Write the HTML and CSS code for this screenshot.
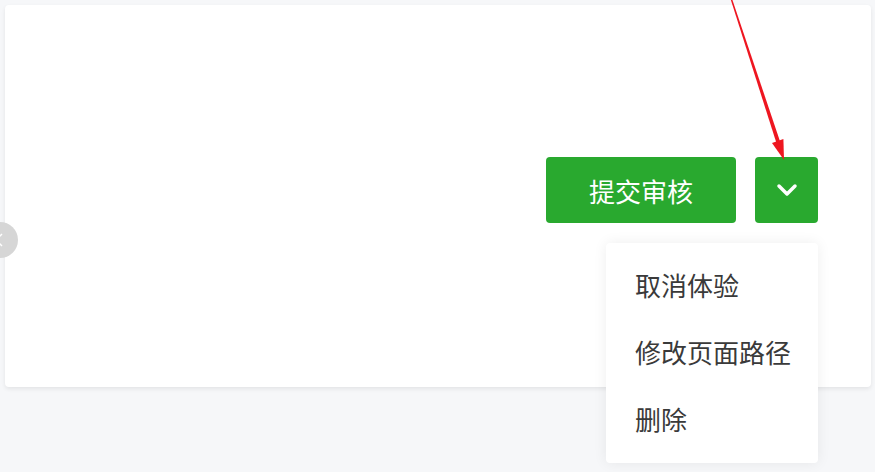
FILE: index.html
```html
<!DOCTYPE html>
<html lang="zh-CN">
<head>
  <meta charset="UTF-8" />
  <meta name="viewport" content="width=device-width, initial-scale=1.0" />
  <title>版本管理</title>
  <link rel="stylesheet" href="styles.css">
</head>
<body>
  <div class="side-toggle">
    <svg width="10" height="14" viewBox="0 0 10 14"><path d="M8 1 L2 7 L8 13" fill="none" stroke="#fff" stroke-width="1.5"/></svg>
  </div>

  <div class="card">
    <div class="actions">
      <button class="btn-primary">提交审核</button>
      <div class="dropdown">
        <button class="btn-more">
          <svg width="22" height="14" viewBox="0 0 22 14"><path d="M3 3 L11 11 L19 3" fill="none" stroke="#fff" stroke-width="3.5" stroke-linecap="round" stroke-linejoin="round"/></svg>
        </button>
        <ul class="menu">
          <li>取消体验</li>
          <li>修改页面路径</li>
          <li>删除</li>
        </ul>
      </div>
    </div>
  </div>

  <!-- annotation arrow -->
  <svg class="annotation" width="875" height="472" viewBox="0 0 875 472">
    <polygon points="731.7,-2.2 730.3,-1.8 776.6,143.6 780.4,142.4" fill="#ee1620"/>
    <polygon points="784,160 772,142.9 783.4,139.1" fill="#ee1620"/>
  </svg>
</body>
</html>
```

FILE: styles.css
```css
html, body {
  margin: 0;
  padding: 0;
  font-family: "Noto Sans CJK SC", "Noto Sans", sans-serif;
  background: #f6f7f9;
  overflow: hidden;
}
body {
  position: relative;
  height: 472px;
  padding-top: 5px;
  box-sizing: border-box;
}
.card {
  margin: 0 4px 0 5px;
  height: 382px;
  background: #fff;
  border-radius: 4px;
  box-shadow: 0 2px 4px rgba(0, 0, 0, 0.08);
}
.actions {
  display: flex;
  justify-content: flex-end;
  gap: 19px;
  padding: 152px 53px 0 0;
}
button {
  border: none;
  background: #29a92f;
  color: #fff;
  border-radius: 4px;
  cursor: pointer;
  font-family: inherit;
}
.btn-primary {
  width: 190px;
  height: 66px;
  font-size: 26px;
  letter-spacing: 0;
}
.dropdown { position: relative; }
.btn-more {
  width: 63px;
  height: 66px;
  display: flex;
  align-items: center;
  justify-content: center;
  padding: 0;
}
.menu {
  position: absolute;
  top: 86px;
  right: 0;
  width: 212px;
  margin: 0;
  padding: 8px 0 11px;
  list-style: none;
  background: #fff;
  border-radius: 4px;
  box-shadow: 0 0 14px rgba(0, 0, 0, 0.07);
  z-index: 2;
}
.menu li {
  height: 67px;
  line-height: 67px;
  padding-left: 29px;
  font-size: 26px;
  color: #3a3a3a;
}
.side-toggle {
  position: absolute;
  left: -18px;
  top: 222px;
  width: 36px;
  height: 36px;
  border-radius: 50%;
  background: #d6d6d6;
  display: flex;
  align-items: center;
  justify-content: flex-end;
  padding-right: 14px;
  box-sizing: border-box;
  z-index: 3;
}
.annotation {
  position: absolute;
  left: 0;
  top: 0;
  pointer-events: none;
  z-index: 5;
}
```
